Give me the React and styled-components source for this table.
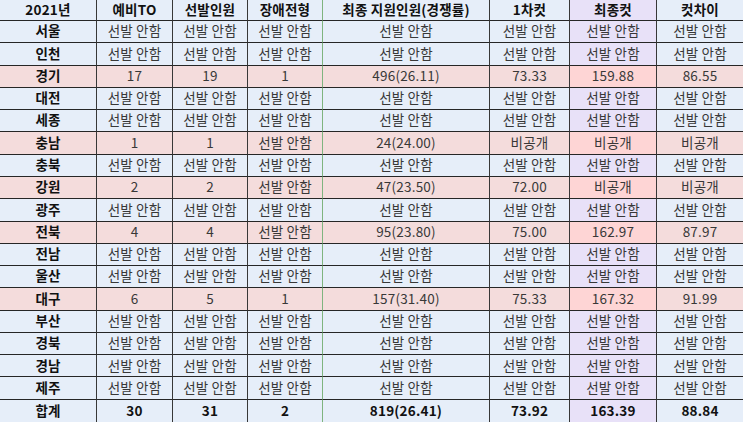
import React from 'react'
import styled, { createGlobalStyle } from 'styled-components'

const GlobalStyle = createGlobalStyle`
  html, body {
    margin: 0;
    padding: 0;
    background: #ffffff;
  }
  body {
    font-family: "Noto Sans CJK KR", "Noto Sans", sans-serif;
  }
`

const Colors = {
  base: '#e6eef9',
  pink: '#f4dcdc',
  lavender: '#e8e1f8',
  hotPink: '#fed5d5',
  line: '#262626',
  divider: '#383838',
  green: '#7fb47f',
  text: '#383838',
  strong: '#111111'
}

const columns = [97, 76, 75, 75, 167, 80, 87, 86]

const Sheet = styled.div`
  width: 743px;
  height: 422px;
  overflow: hidden;
  display: grid;
  grid-template-columns: ${columns.map((w) => `${w}px`).join(' ')};
  grid-template-rows: 21px repeat(18, 1fr);
  background: ${Colors.base};
`

const cellBg = ({ $pink, $cut }) => {
  if ($pink && $cut) return Colors.hotPink
  if ($pink) return Colors.pink
  if ($cut) return Colors.lavender
  return Colors.base
}

const Cell = styled.div`
  box-sizing: border-box;
  display: flex;
  align-items: center;
  justify-content: center;
  white-space: nowrap;
  font-size: 13.5px;
  line-height: 1;
  padding-bottom: 1px;
  letter-spacing: 0.2px;
  color: ${({ $bold }) => ($bold ? Colors.strong : Colors.text)};
  font-weight: ${({ $bold }) => ($bold ? 700 : 400)};
  background: ${cellBg};
  border-bottom: ${({ $last }) => ($last ? 'none' : `1px solid ${Colors.line}`)};
  border-right: ${({ $edge }) =>
    $edge === 'green'
      ? `1px solid ${Colors.green}`
      : $edge === 'none'
        ? 'none'
        : `1px solid ${Colors.divider}`};
`

const headers = ['2021년', '예비TO', '선발인원', '장애전형', '최종 지원인원(경쟁률)', '1차컷', '최종컷', '컷차이']

const NO = '선발 안함'
const none = [NO, NO, NO, NO, NO, NO, NO]

const rows = [
  { name: '서울', values: none },
  { name: '인천', values: none },
  { name: '경기', pink: true, values: ['17', '19', '1', '496(26.11)', '73.33', '159.88', '86.55'] },
  { name: '대전', values: none },
  { name: '세종', values: none },
  { name: '충남', pink: true, values: ['1', '1', NO, '24(24.00)', '비공개', '비공개', '비공개'] },
  { name: '충북', values: none },
  { name: '강원', pink: true, values: ['2', '2', NO, '47(23.50)', '72.00', '비공개', '비공개'] },
  { name: '광주', values: none },
  { name: '전북', pink: true, values: ['4', '4', NO, '95(23.80)', '75.00', '162.97', '87.97'] },
  { name: '전남', values: none },
  { name: '울산', values: none },
  { name: '대구', pink: true, values: ['6', '5', '1', '157(31.40)', '75.33', '167.32', '91.99'] },
  { name: '부산', values: none },
  { name: '경북', values: none },
  { name: '경남', values: none },
  { name: '제주', values: none },
  { name: '합계', total: true, values: ['30', '31', '2', '819(26.41)', '73.92', '163.39', '88.84'] }
]

const edgeFor = (index) => {
  if (index === 3) return 'green'
  if (index === columns.length - 1) return 'none'
  return 'gray'
}

export default function App() {
  return (
    <>
      <GlobalStyle />
      <Sheet>
        {headers.map((title, i) => (
          <Cell key={title} $bold $cut={i === 6} $edge={edgeFor(i)}>
            {title}
          </Cell>
        ))}
        {rows.map((row, r) => {
          const last = r === rows.length - 1
          return (
            <React.Fragment key={row.name}>
              <Cell $bold $pink={row.pink} $edge={edgeFor(0)} $last={last}>
                {row.name}
              </Cell>
              {row.values.map((value, i) => (
                <Cell
                  key={i}
                  $bold={row.total}
                  $pink={row.pink}
                  $cut={i === 5}
                  $edge={edgeFor(i + 1)}
                  $last={last}
                >
                  {value}
                </Cell>
              ))}
            </React.Fragment>
          )
        })}
      </Sheet>
    </>
  )
}
